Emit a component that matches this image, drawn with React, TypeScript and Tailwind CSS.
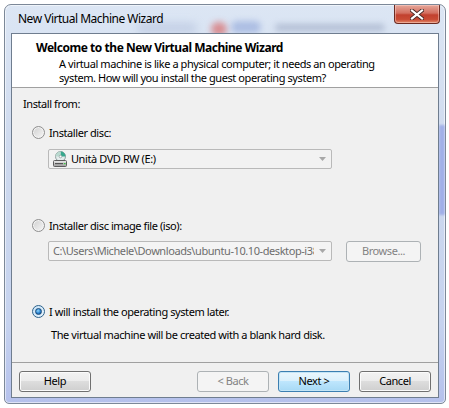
import React from 'react';

const ui = "font-['Noto_Sans','Liberation_Sans',sans-serif]";

function Radio({ checked }: { checked?: boolean }) {
  if (checked) {
    return (
      <span className="flex h-[13px] w-[13px] shrink-0 items-center justify-center rounded-full border border-[#2c628b] bg-[linear-gradient(135deg,#c6e2f7,#eaf4fc)]">
        <span className="h-[7px] w-[7px] rounded-full border border-[#1b4a78] bg-[radial-gradient(circle_at_40%_35%,#8fd8ff,#1f78c8_60%,#0d3f78)]" />
      </span>
    );
  }
  return (
    <span className="flex h-[13px] w-[13px] shrink-0 rounded-full border border-[#8f8f8f] bg-[linear-gradient(135deg,#cfcfcf,#f7f7f7)] shadow-[inset_0_0_0_1px_#f4f4f4]" />
  );
}

function Arrow({ color }: { color: string }) {
  return (
    <svg width="7" height="4" viewBox="0 0 7 4" className="shrink-0">
      <path d="M0 0h7L3.5 4z" fill={color} />
    </svg>
  );
}

function DriveIcon() {
  return (
    <svg width="16" height="16" viewBox="0 0 16 16" className="shrink-0">
      <defs>
        <linearGradient id="drv" x1="0" y1="0" x2="0" y2="1">
          <stop offset="0" stopColor="#eeeeee" />
          <stop offset="1" stopColor="#9b9b9b" />
        </linearGradient>
      </defs>
      <circle cx="8.5" cy="5.5" r="5" fill="#e4ecec" stroke="#7b8b8b" strokeWidth="0.8" />
      <path d="M8.5 5.5V0.5A5 5 0 0 1 13.5 5.5z" fill="#38a88e" />
      <path d="M8.5 5.5H3.5A5 5 0 0 1 8.5 0.5z" fill="#b9d9cf" />
      <circle cx="8.5" cy="5.5" r="1.3" fill="#fff" stroke="#7b8b8b" strokeWidth="0.6" />
      <rect x="1.5" y="9.5" width="13" height="6" rx="1" fill="url(#drv)" stroke="#5c5c5c" />
      <rect x="3" y="12" width="8" height="1.2" fill="#555" />
      <rect x="11.8" y="12" width="1.8" height="1.2" fill="#39c43d" />
    </svg>
  );
}

function Button({ label, variant = 'normal' }: { label: string; variant?: 'normal' | 'default' | 'disabled' }) {
  const look =
    variant === 'default'
      ? 'border-[#3c7fb1] bg-[linear-gradient(#eaf6fd_0%,#d9f0fc_50%,#bee6fd_50%,#a7d9f5_100%)] shadow-[inset_0_0_0_1px_#c4e5f6] text-black'
      : variant === 'disabled'
        ? 'border-[#adb2b5] bg-[#f4f4f4] text-[#838383]'
        : 'border-[#707070] bg-[linear-gradient(#f2f2f2_0%,#ebebeb_50%,#dddddd_50%,#cfcfcf_100%)] shadow-[inset_0_0_0_1px_#fbfbfb] text-black';
  return (
    <div className={`flex h-[21px] w-[72px] items-center justify-center rounded-[3px] border text-[11px] ${look}`}>
      {label}
    </div>
  );
}

export default function App() {
  return (
    <div className={`h-[408px] w-[449px] bg-white pl-[4px] pt-[4px] ${ui}`}>
      <div className="relative flex h-[400px] w-[442px] flex-col overflow-hidden rounded-t-[7px] rounded-b-[5px] border border-[#7c8898] bg-[linear-gradient(#dce6f4,#cdd9ee_40%,#c6d3ef_80%,#b5c1ec)] px-[6px] pb-[5px] shadow-[inset_0_0_0_1px_rgba(255,255,255,0.55)]">
        {/* blurred desktop behind the glass */}
        <div className="pointer-events-none absolute left-[206px] top-[17px] h-[14px] w-[16px] rounded-full bg-[#d86a6a] opacity-70 blur-[3px]" />
        <div className="pointer-events-none absolute left-[226px] top-[16px] h-[12px] w-[30px] rounded-full bg-[#8ea4d8] opacity-60 blur-[3px]" />
        <div className="pointer-events-none absolute left-[270px] top-[19px] h-[7px] w-[110px] rounded-full bg-[#8a97b4] opacity-50 blur-[3px]" />
        <div className="pointer-events-none absolute left-[132px] top-[18px] h-[10px] w-[60px] rounded-full bg-[#b4c1dc] opacity-60 blur-[4px]" />
        <div className="pointer-events-none absolute left-[434px] top-[120px] h-[90px] w-[6px] bg-[#8f9fe6] opacity-70 blur-[1px]" />

        {/* title bar */}
        <div className="relative flex h-[28px] shrink-0 items-center pb-[1px] pl-[7px] text-[12px] tracking-[-0.5px] text-black">
          New Virtual Machine Wizard
        </div>
        <div className="absolute right-[5px] top-0 flex h-[19px] w-[46px] items-center justify-center rounded-b-[4px] border border-t-0 border-[#6b2a22] bg-[linear-gradient(#e6a79a_0%,#d36f60_45%,#c2412f_55%,#c94b35_80%,#e28a6c_100%)] shadow-[inset_0_0_0_1px_rgba(255,220,210,0.45)]">
          <svg width="14" height="11" viewBox="0 0 14 11">
            <path d="M2 1.5l10 8M12 1.5l-10 8" stroke="#4a2a26" strokeWidth="4" strokeLinecap="square" />
            <path d="M2 1.5l10 8M12 1.5l-10 8" stroke="#ffffff" strokeWidth="2.2" strokeLinecap="square" />
          </svg>
        </div>

        {/* client area */}
        <div className="relative flex h-[365px] w-[428px] shrink-0 flex-col border border-[#6f7d8f] bg-[#f0f0f0] text-[11px] tracking-[-0.42px] text-black">
          <div className="h-[54px] shrink-0 border-b border-[#a0a0a0] bg-white pt-[6px] leading-[14px]">
            <div className="pl-[24px] text-[12px] font-bold leading-[16px] tracking-[-0.46px]">Welcome to the New Virtual Machine Wizard</div>
            <div className="pl-[47px] pt-px">
              A virtual machine is like a physical computer; it needs an operating
              <br />
              system. How will you install the guest operating system?
            </div>
          </div>

          <div className="flex h-[274px] shrink-0 flex-col leading-[14px]">
            <div className="mt-[9px] pl-[11px]">Install from:</div>

            <div className="mt-[14px] flex items-center gap-[4px] pl-[20px]">
              <Radio />
              <span className="pt-px">Installer disc:</span>
            </div>
            <div className="ml-[36px] mt-[9px] flex h-[20px] w-[284px] items-center gap-[3px] rounded-[2px] border border-[#b9b9b9] bg-[#f2f2f2] pl-[3px] pr-[5px]">
              <DriveIcon />
              <span className="flex-1">Unità DVD RW (E:)</span>
              <Arrow color="#a8a8a8" />
            </div>

            <div className="mt-[49px] flex items-center gap-[4px] pl-[20px]">
              <Radio />
              <span className="pt-px">Installer disc image file (iso):</span>
            </div>
            <div className="ml-[36px] mt-[8px] flex h-[20px] items-center gap-[14px]">
              <div className="flex h-[20px] w-[284px] items-center rounded-[2px] border border-[#b9b9b9] bg-[#f4f4f4] pl-[4px] pr-[5px]">
                <span className="w-[261px] overflow-hidden whitespace-nowrap text-[#6d6d6d]">
                  C:\Users\Michele\Downloads\ubuntu-10.10-desktop-i386.iso
                </span>
                <span className="flex flex-1 justify-end">
                  <Arrow color="#a8a8a8" />
                </span>
              </div>
              <div className="flex h-[21px] w-[75px] items-center justify-center rounded-[3px] border border-[#adb2b5] bg-[#f4f4f4] text-[#838383]">
                Browse...
              </div>
            </div>

            <div className="mt-[43px] flex items-center gap-[4px] pl-[20px]">
              <Radio checked />
              <span className="pt-px">I will install the operating system later.</span>
            </div>
            <div className="mt-[9px] pl-[39px]">The virtual machine will be created with a blank hard disk.</div>
          </div>

          <div className="flex h-[35px] shrink-0 items-start border-t border-[#a0a0a0] px-[7px] pt-[8px]">
            <Button label="Help" />
            <div className="ml-auto flex gap-[9px]">
              <Button label="< Back" variant="disabled" />
              <Button label="Next >" variant="default" />
              <Button label="Cancel" />
            </div>
          </div>
        </div>
      </div>
    </div>
  );
}
